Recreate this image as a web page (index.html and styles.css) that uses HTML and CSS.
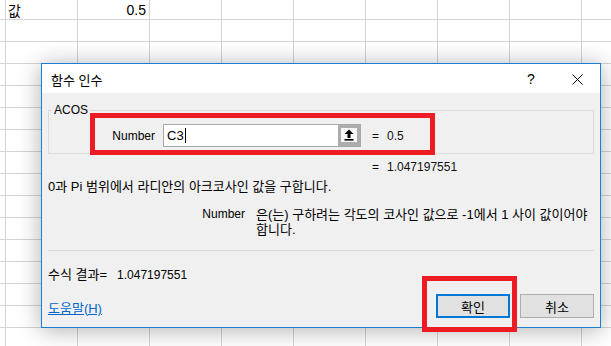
FILE: index.html
```html
<!DOCTYPE html>
<html lang="ko">
<head>
<meta charset="utf-8">
<title>함수 인수</title>
<link rel="stylesheet" href="styles.css">
</head>
<body>
<div class="sheet-row">
  <div class="cell cell-text">값</div>
  <div class="cell cell-num">0.5</div>
</div>

<div class="dialog">
  <div class="titlebar">
    <span class="title">함수 인수</span>
    <span class="tbtn help">?</span>
    <span class="tbtn close">
      <svg width="11" height="11" viewBox="0 0 11 11"><path d="M0.5 0.5 L10.5 10.5 M10.5 0.5 L0.5 10.5" stroke="#000" stroke-width="1" fill="none"/></svg>
    </span>
  </div>
  <div class="content">
    <fieldset class="group">
      <legend>ACOS</legend>
      <div class="arg-row">
        <span class="arg-label">Number</span>
        <div class="input">
          <span class="input-text">C3</span><span class="caret"></span>
          <span class="ref-btn">
            <svg width="10" height="12" viewBox="0 0 10 12"><path d="M5 0.5 L9.5 5 H6.5 V9 H3.5 V5 H0.5 Z" fill="#000"/><rect x="0.5" y="10" width="9" height="1.6" fill="#000"/></svg>
          </span>
        </div>
        <span class="eq">=</span>
        <span class="val">0.5</span>
      </div>
    </fieldset>
    <div class="result-row"><span class="eq-plain">=</span><span class="val">1.047197551</span></div>
    <p class="desc">0과 Pi 범위에서 라디안의 아크코사인 값을 구합니다.</p>
    <div class="param">
      <span class="param-name">Number</span>
      <span class="param-text">은(는) 구하려는 각도의 코사인 값으로 -1에서 1 사이 값이어야 합니다.</span>
    </div>
    <div class="separator"></div>
    <div class="formula">수식 결과=<span class="formula-val">1.047197551</span></div>
    <div class="footer">
      <a class="help-link" href="#">도움말(H)</a>
      <div class="buttons">
        <button class="btn primary">확인</button>
        <button class="btn">취소</button>
      </div>
    </div>
  </div>
</div>

<div class="mark mark-arg"></div>
<div class="mark mark-ok"></div>
</body>
</html>
```

FILE: styles.css
```css
html, body {
  margin: 0;
  padding: 0;
}
body {
  width: 611px;
  height: 346px;
  overflow: hidden;
  position: relative;
  background-color: #fff;
  background-image:
    linear-gradient(to right, #d4d4d4 1px, transparent 1px),
    linear-gradient(to bottom, #d4d4d4 1px, transparent 1px);
  background-size: 72px 22px;
  background-position: 5px 19px;
  font-family: "Liberation Sans", "Noto Sans CJK KR", sans-serif;
  color: #000;
}

/* spreadsheet first row */
.sheet-row {
  display: flex;
  height: 19px;
  padding-left: 6px;
}
.cell {
  width: 72px;
  box-sizing: border-box;
  font-family: "Noto Sans CJK KR", "Liberation Sans", sans-serif;
  font-size: 14px;
  line-height: 17px;
  display: flex;
  align-items: flex-end;
}
.cell-text {
  padding-left: 2px;
}
.cell-num {
  justify-content: flex-end;
  padding-right: 4px;
  font-family: "Liberation Sans", sans-serif;
  font-size: 14px;
}

/* dialog window */
.dialog {
  position: absolute;
  left: 41px;
  top: 63px;
  width: 560px;
  height: 265px;
  box-sizing: border-box;
  border: 1px solid #1a7fd6;
  background: #f0f0f0;
  box-shadow: 0 2px 22px rgba(0, 0, 0, 0.32);
  display: flex;
  flex-direction: column;
  font-size: 12px;
}
.titlebar {
  height: 29px;
  background: #fff;
  display: flex;
  align-items: center;
  flex-shrink: 0;
}
.title {
  flex: 1;
  padding-left: 9px;
  font-size: 13px;
  padding-top: 2px;
}
.tbtn {
  width: 46px;
  height: 29px;
  display: flex;
  align-items: center;
  justify-content: center;
}
.help {
  font-size: 14px;
  padding-top: 1px;
}
.close svg {
  display: block;
  margin-top: 1px;
}

.content {
  flex: 1;
  display: flex;
  flex-direction: column;
  padding: 9px 6px 9px 6px;
}

.group {
  margin: 0;
  padding: 0 0 6px 0;
  border: 1px solid #dcdcdc;
  min-width: 0;
}
.group legend {
  margin-left: 3px;
  padding: 0 2px;
  font-size: 12px;
  line-height: 16px;
}
.arg-row {
  display: flex;
  align-items: center;
  height: 23px;
  margin-top: 6px;
}
.arg-label {
  width: 106px;
  text-align: right;
}
.input {
  margin-left: 8px;
  width: 198px;
  height: 23px;
  box-sizing: border-box;
  border: 1px solid #a8a8a8;
  background: #fff;
  display: flex;
  align-items: center;
}
.input-text {
  padding-left: 3px;
  font-size: 13px;
}
.caret {
  width: 1px;
  height: 15px;
  background: #000;
  margin-left: 1px;
}
.ref-btn {
  margin-left: auto;
  width: 22px;
  height: 21px;
  box-sizing: border-box;
  border: 3px solid #adadad;
  border-bottom-width: 4px;
  background: #f7f7f7;
  display: flex;
  align-items: center;
  justify-content: center;
}
.ref-btn svg {
  display: block;
}
.eq {
  margin-left: 11px;
}
.val {
  margin-left: 8px;
  color: #111;
}

.result-row {
  margin-top: 6px;
  padding-left: 324px;
  line-height: 15px;
}
.desc {
  margin: 4px 0 0 0;
  font-size: 13px;
  line-height: 15px;
}
.param {
  display: flex;
  margin-top: 13px;
  line-height: 15px;
}
.param-name {
  width: 197px;
  flex-shrink: 0;
  text-align: right;
}
.param-text {
  margin-left: 11px;
  flex: 1;
  font-size: 13px;
  word-break: keep-all;
}
.separator {
  height: 1px;
  background: #d9d9d9;
  margin-top: 13px;
}
.formula {
  margin-top: 16px;
  font-size: 13px;
  line-height: 15px;
}
.formula-val {
  font-size: 12px;
  margin-left: 10px;
}

.footer {
  margin-top: auto;
  display: flex;
  justify-content: space-between;
  align-items: center;
}
.help-link {
  color: #0066cc;
  text-decoration: underline;
  font-size: 13px;
  margin-top: 4px;
  line-height: 15px;
}
.buttons {
  display: flex;
  gap: 10px;
}
.btn {
  width: 74px;
  height: 24px;
  box-sizing: border-box;
  border: 1px solid #adadad;
  background: #e1e1e1;
  font-family: "Liberation Sans", "Noto Sans CJK KR", sans-serif;
  font-size: 13px;
  color: #000;
  padding: 0;
  margin: 0;
}
.btn.primary {
  border: 2px solid #0078d7;
}

/* red annotation overlays */
.mark {
  position: absolute;
  box-sizing: border-box;
  border: 5px solid #ed1c24;
}
.mark-arg {
  left: 90px;
  top: 113px;
  width: 345px;
  height: 42px;
}
.mark-ok {
  left: 422px;
  top: 276px;
  width: 95px;
  height: 56px;
}
```
